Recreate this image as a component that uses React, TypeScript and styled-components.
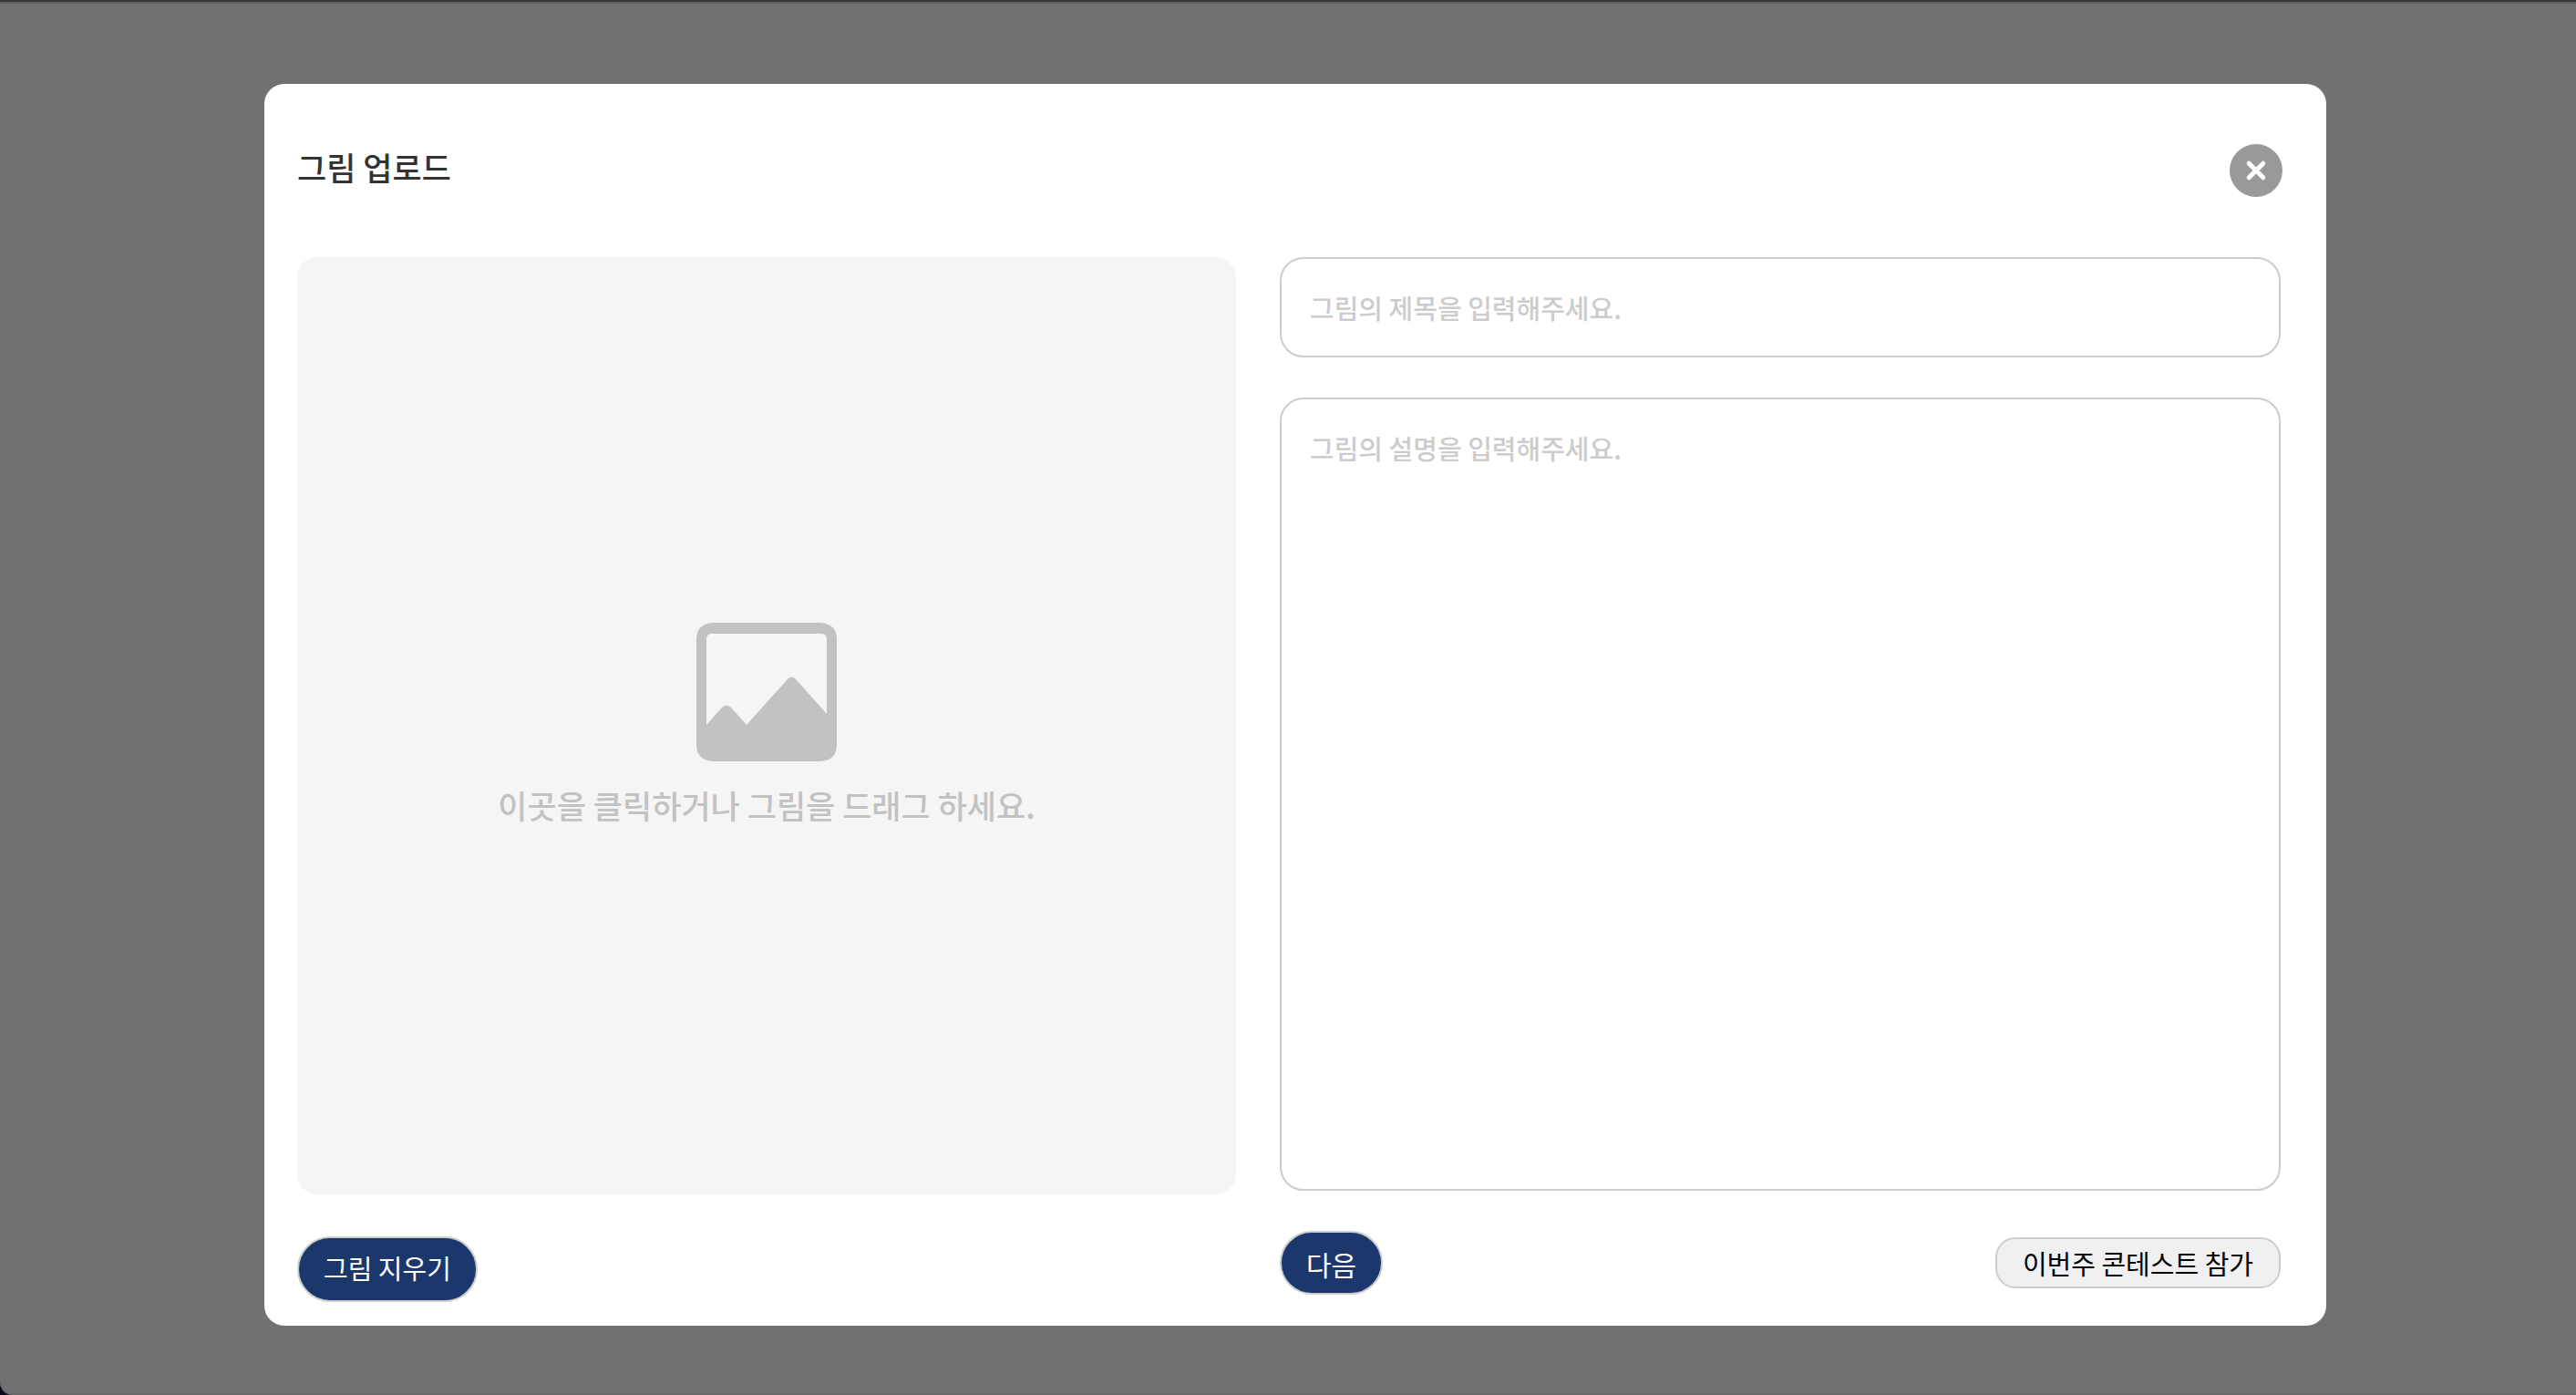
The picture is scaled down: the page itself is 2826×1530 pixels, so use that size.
import React, { useState } from "react";
import styled, { createGlobalStyle } from "styled-components";

const GlobalStyle = createGlobalStyle`
  *, *::before, *::after { box-sizing: border-box; }
  body {
    margin: 0;
    background: #08081a;
    font-family: "Noto Sans CJK KR", "Noto Sans", sans-serif;
    font-weight: 400;
  }
  button, input, textarea { font: inherit; }
`;

const Backdrop = styled.div`
  display: flex;
  min-height: 100vh;
  padding: 88px 274px 76px 290px;
  border-top: 4px solid #5f5f60;
  border-bottom-left-radius: 14px;
  background: #717171;
  box-shadow: inset 0 -2px 0 #686868;
`;

const TopEdge = styled.div`
  position: absolute;
  top: 0;
  left: 0;
  right: 0;
  height: 2px;
  background: #36373c;
`;

const Modal = styled.section`
  display: flex;
  flex: 1;
  flex-direction: column;
  gap: 66px;
  padding: 66px 0 26px;
  border-radius: 22px;
  background: #fff;
`;

const Header = styled.header`
  display: flex;
  align-items: center;
  justify-content: space-between;
  padding: 0 48px 0 36px;
`;

const Title = styled.h1`
  margin: 0;
  padding-bottom: 8px;
  color: #333;
  font-size: 35px;
  font-weight: 500;
  line-height: 50px;
`;

const CloseButton = styled.button`
  width: 58px;
  height: 58px;
  padding: 0;
  border: 0;
  border-radius: 50%;
  background: #999;
  cursor: pointer;

  svg { display: block; }
`;

const Body = styled.form`
  display: grid;
  flex: 1;
  grid-template-columns: 1030fr 1098fr;
  gap: 48px;
  padding: 0 50px 0 36px;
`;

const UploadColumn = styled.div`
  display: flex;
  flex-direction: column;
  align-items: flex-start;
  gap: 46px;
`;

const DropArea = styled.label`
  display: flex;
  flex: 1;
  flex-direction: column;
  align-items: center;
  justify-content: center;
  gap: 22px;
  width: 100%;
  border-radius: 22px;
  background: #f5f5f5;
  color: #c2c2c2;
  font-size: 35px;
  font-weight: 500;
  line-height: 52px;
  cursor: pointer;
`;

const FileInput = styled.input`
  position: absolute;
  width: 1px;
  height: 1px;
  opacity: 0;
`;

const FieldsColumn = styled.div`
  display: flex;
  flex-direction: column;
  gap: 44px;
  padding-bottom: 8px;
`;

const TitleField = styled.input`
  width: 100%;
  height: 110px;
  padding: 0 31px;
  border: 2px solid #ccc;
  border-radius: 26px;
  background: #fff;
  color: #333;
  font-size: 29px;
  font-weight: 500;

  &::placeholder { color: #ccc; opacity: 1; }
`;

const DescriptionField = styled.textarea`
  display: block;
  flex: 1;
  width: 100%;
  padding: 31px;
  border: 2px solid #ccc;
  border-radius: 26px;
  background: #fff;
  color: #333;
  font-size: 29px;
  font-weight: 500;
  line-height: 44px;
  resize: none;

  &::placeholder { color: #ccc; opacity: 1; }
`;

const Actions = styled.div`
  display: flex;
  align-items: center;
  justify-content: space-between;
`;

const PillButton = styled.button<{ $size: number }>`
  height: ${({ $size }) => $size}px;
  padding: 0 27px;
  border: 2px solid #ccc;
  border-radius: 36px;
  background: #1c376b;
  color: #fff;
  font-size: 29px;
  line-height: 44px;
  white-space: nowrap;
  cursor: pointer;
`;

const EraseButton = styled(PillButton)`
  padding-bottom: 4px;
`;

const NextButton = styled(PillButton)`
  padding-top: 2px;
  font-size: 30px;
`;

const ContestButton = styled(PillButton)`
  padding: 0 28px;
  border-radius: 22px;
  background: #f0f0f0;
  color: #000;
`;

function CloseIcon() {
  return (
    <svg width="58" height="58" viewBox="0 0 58 58" aria-hidden="true">
      <path d="M21.2 21.2 36.8 36.8M36.8 21.2 21.2 36.8" stroke="#fff" strokeWidth="5" strokeLinecap="round" />
    </svg>
  );
}

function PictureIcon() {
  return (
    <svg width="154" height="152" viewBox="0 0 154 152" fill="currentColor" aria-hidden="true">
      <path
        fillRule="evenodd"
        d="M17 0H137Q154 2 154 18V134Q154 150 137 152H17Q0 150 0 134V18Q0 2 17 0ZM17 12Q11 12 11 18V112L28 93Q33 88 38 93L55 112L100 62Q104 57 109 62L143 100V18Q143 12 137 12Z"
      />
    </svg>
  );
}

export default function App() {
  const [title, setTitle] = useState("");
  const [description, setDescription] = useState("");

  return (
    <>
      <GlobalStyle />
      <Backdrop>
        <TopEdge />
        <Modal role="dialog" aria-labelledby="upload-title">
          <Header>
            <Title id="upload-title">그림 업로드</Title>
            <CloseButton type="button" aria-label="닫기">
              <CloseIcon />
            </CloseButton>
          </Header>
          <Body onSubmit={(event) => event.preventDefault()}>
            <UploadColumn>
              <DropArea htmlFor="picture">
                <PictureIcon />
                이곳을 클릭하거나 그림을 드래그 하세요.
                <FileInput id="picture" type="file" accept="image/*" />
              </DropArea>
              <EraseButton type="button" $size={72}>그림 지우기</EraseButton>
            </UploadColumn>
            <FieldsColumn>
              <TitleField
                aria-label="그림의 제목"
                placeholder="그림의 제목을 입력해주세요."
                value={title}
                onChange={(event) => setTitle(event.target.value)}
              />
              <DescriptionField
                aria-label="그림의 설명"
                placeholder="그림의 설명을 입력해주세요."
                value={description}
                onChange={(event) => setDescription(event.target.value)}
              />
              <Actions>
                <NextButton type="submit" $size={70}>다음</NextButton>
                <ContestButton type="button" $size={56}>이번주 콘테스트 참가</ContestButton>
              </Actions>
            </FieldsColumn>
          </Body>
        </Modal>
      </Backdrop>
    </>
  );
}
